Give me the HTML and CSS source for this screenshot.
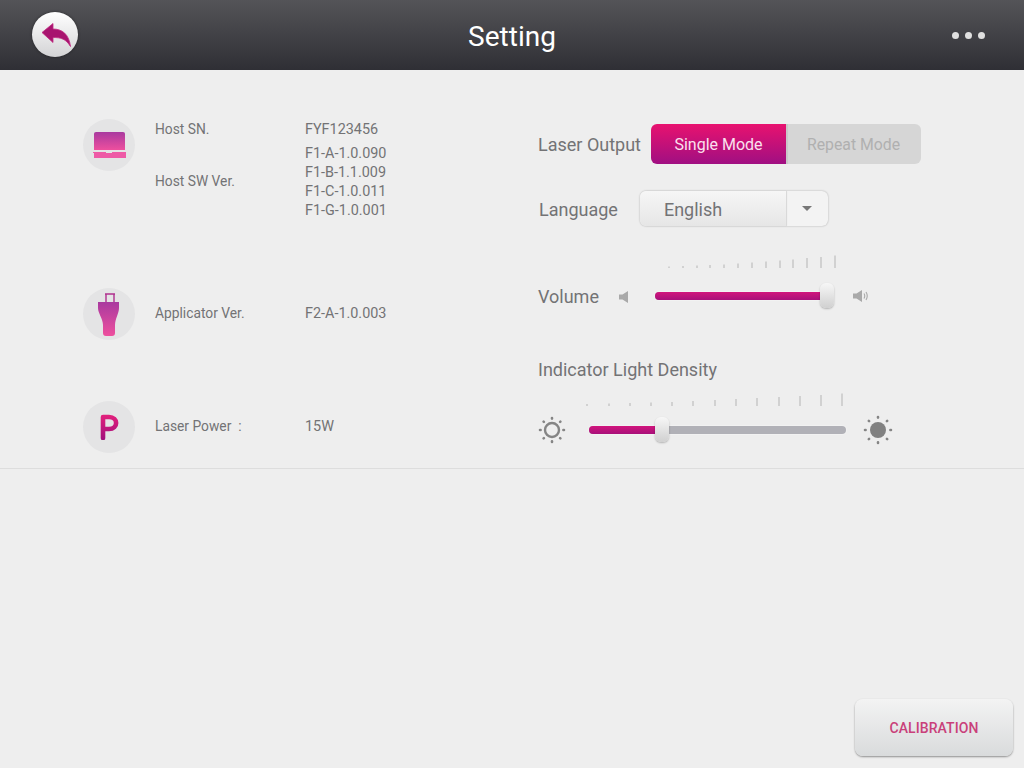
FILE: index.html
```html
<!DOCTYPE html>
<html lang="en">
<head>
<meta charset="utf-8">
<title>Setting</title>
<link rel="stylesheet" href="styles.css">
</head>
<body>
<svg class="defs" width="0" height="0" aria-hidden="true">
  <defs>
    <linearGradient id="pinkV" x1="0" y1="0" x2="0" y2="1"><stop offset="0" stop-color="#a93a9f"/><stop offset="1" stop-color="#ee4f9e"/></linearGradient>
    <linearGradient id="pinkP" gradientUnits="userSpaceOnUse" x1="0" y1="2" x2="0" y2="26"><stop offset="0" stop-color="#e0207c"/><stop offset="1" stop-color="#a00f7c"/></linearGradient>
  </defs>
</svg>
<div class="app">
  <header class="topbar">
    <button class="back">
      <svg width="30" height="24" viewBox="0 0 30 24"><path d="M1 9.5 L12 0.5 L12 6 C21 6 28 11 29.5 23.5 C25 16 20 14.5 12 14.5 L12 19.5 Z" fill="#a8146f" stroke="#c02a80" stroke-width="0.8" stroke-linejoin="round"/></svg>
    </button>
    <h1 class="title">Setting</h1>
    <div class="more"><i></i><i></i><i></i></div>
  </header>

  <main class="panel">
    <section class="info">
      <div class="info-row row-host">
        <div class="badge">
          <svg width="34" height="30" viewBox="0 0 34 30"><path d="M2 3.5 Q2 2 4 2 H31 Q33 2 33 3.5 V20 H2 Z" fill="url(#pinkV)"/><path d="M1 22 H14 V23 H20 V22 H34 V28 H2 V23 H1 Z" fill="#ee5aa6"/></svg>
        </div>
        <div class="pairs">
          <div class="pair pair-sn"><span class="label">Host SN.</span><span class="value">FYF123456</span></div>
          <div class="pair pair-sw"><span class="label">Host SW Ver.</span>
            <div class="value stack"><span>F1-A-1.0.090</span><span>F1-B-1.1.009</span><span>F1-C-1.0.011</span><span>F1-G-1.0.001</span></div>
          </div>
        </div>
      </div>
      <div class="info-row row-app">
        <div class="badge">
          <svg width="22" height="44" viewBox="0 0 22 44"><path d="M7 1 H17 M8 1 V9 M16 1 V9" fill="none" stroke="#b0308f" stroke-width="1.4"/><path d="M0 9 H21 V15 C21 20 17 26 17 32 V40 Q17 43 14 43 H8 Q5 43 5 40 V32 C5 26 0 20 0 15 Z" fill="url(#pinkV)"/></svg>
        </div>
        <div class="pair"><span class="label">Applicator Ver.</span><span class="value">F2-A-1.0.003</span></div>
      </div>
      <div class="info-row row-power">
        <div class="badge">
          <svg width="20" height="26" viewBox="0 0 20 26"><path d="M4 24 V3 H10 C19.5 3 19.5 15 10 15 H4" fill="none" stroke="url(#pinkP)" stroke-width="4.6" stroke-linecap="round" stroke-linejoin="round"/></svg>
        </div>
        <div class="pair"><span class="label">Laser Power &nbsp;:</span><span class="value">15W</span></div>
      </div>
    </section>

    <section class="controls">
      <div class="ctrl-laser">
        <span class="ctrl-label">Laser Output</span>
        <div class="segmented">
          <span class="seg seg-on">Single Mode</span>
          <span class="seg seg-off">Repeat Mode</span>
        </div>
      </div>
      <div class="ctrl-lang">
        <span class="ctrl-label">Language</span>
        <div class="select">
          <span class="select-value">English</span>
          <span class="select-arrow"><b></b></span>
        </div>
      </div>
      <div class="ctrl-volume">
        <svg class="ticks ticks-vol" width="168" height="13" viewBox="0 0 168 13" stroke="#b4b4b4" stroke-width="1">
          <path d="M1 13V11.5M15 13V11M29 13V10.5M42 13V10M56 13V9.5M70 13V8.5M84 13V7.5M98 13V6.5M112 13V5.5M125 13V4.5M139 13V3M153 13V2M167 13V0.5"/>
        </svg>
        <div class="vol-row">
          <span class="ctrl-label">Volume</span>
          <svg class="spk spk-low" width="10" height="14" viewBox="0 0 10 14"><path d="M0 4.5H3.5L9 1V13L3.5 9.5H0Z" fill="#a9a9a9"/></svg>
          <div class="slider slider-vol"><div class="fill fill-vol"></div><div class="thumb"></div></div>
          <svg class="spk spk-high" width="16" height="14" viewBox="0 0 16 14"><path d="M0 4.5H3.5L9 1V13L3.5 9.5H0Z" fill="#a9a9a9"/><path d="M11 4.5Q12.5 7 11 9.5M13 3Q15.5 7 13 11" fill="none" stroke="#a9a9a9" stroke-width="1.1"/></svg>
        </div>
      </div>
      <div class="ctrl-density">
        <span class="ctrl-label">Indicator Light Density</span>
        <svg class="ticks ticks-den" width="258" height="13" viewBox="0 0 258 13" stroke="#b4b4b4" stroke-width="1">
          <path d="M1 13V11M23 13V10.5M44 13V10M65 13V9.5M86 13V9M107 13V8M129 13V7M150 13V6M171 13V5M193 13V4M214 13V3M235 13V2M256 13V0.5"/>
        </svg>
        <div class="den-row">
          <svg width="28" height="28" viewBox="0 0 28 28"><circle cx="14" cy="14" r="7" fill="none" stroke="#858585" stroke-width="2.4"/><g stroke="#858585" stroke-width="2.6" stroke-linecap="round"><path d="M14 2V2.6M14 25.4V26M2 14H2.6M25.4 14H26M5.6 5.6L5.9 5.9M22.1 22.1L22.4 22.4M22.4 5.6L22.1 5.9M5.9 22.1L5.6 22.4"/></g></svg>
          <div class="slider slider-den"><div class="fill fill-den"></div><div class="thumb"></div></div>
          <svg width="30" height="30" viewBox="0 0 30 30"><circle cx="15" cy="15" r="8" fill="#818181"/><g stroke="#858585" stroke-width="2.6" stroke-linecap="round"><path d="M15 2V2.6M15 27.4V28M2 15H2.6M27.4 15H28M5.8 5.8L6.1 6.1M23.9 23.9L24.2 24.2M24.2 5.8L23.9 6.1M6.1 23.9L5.8 24.2"/></g></svg>
        </div>
      </div>
    </section>
  </main>

  <footer class="bottom">
    <button class="calib">CALIBRATION</button>
  </footer>
</div>
</body>
</html>
```
FILE: styles.css
```css
* { box-sizing: border-box; }
html, body { margin: 0; height: 100%; }
body { background: #eeeeee; font-family: Roboto, "Liberation Sans", sans-serif; overflow: hidden; }
.defs { position: absolute; }
.app { width: 1024px; height: 768px; display: flex; flex-direction: column; }

.topbar { height: 70px; flex: none; display: flex; align-items: center; justify-content: space-between; position: relative;
  background: linear-gradient(#545458, #2f2f35); padding: 0 39px 0 32px; }
.back { width: 46px; height: 45px; margin-top: -1px; padding: 0; border: 0; border-radius: 50%; display: flex; align-items: center; justify-content: center;
  background: linear-gradient(#ffffff, #d3d3d5); box-shadow: 0 0 3px rgba(0,0,0,.45); }
.back svg { width: 30px; height: 24px; margin-top: 1px; margin-left: 1px; flex: none; }
.title { margin: 0; position: absolute; left: 0; right: 0; top: 19px; text-align: center; color: #fff; font-size: 28px; line-height: 36px; font-weight: 400; }
.more { display: flex; gap: 6px; }
.more i { width: 7px; height: 7px; border-radius: 50%; background: #e0e0e0; }

.panel { height: 399px; flex: none; border-bottom: 1px solid #dddddd; display: flex; padding-left: 83px; }
.info { width: 455px; flex: none; display: flex; flex-direction: column; }
.info-row { display: flex; gap: 20px; }
.row-host { margin-top: 49px; height: 169px; }
.row-app { align-items: center; height: 52px; }
.row-power { align-items: center; height: 52px; margin-top: 61px; }
.badge { width: 52px; height: 52px; flex: none; border-radius: 50%; background: #e4e4e5; display: flex; align-items: center; justify-content: center; }
.row-app .badge svg { margin-top: 2px; margin-left: -1px; }
.pairs { display: flex; flex-direction: column; }
.pair { display: flex; font-size: 13.8px; color: #737375; line-height: 19px; }
.row-app .pair, .row-power .pair { margin-top: -2px; }
.pair-sn { margin-top: 1px; }
.pair-sw { margin-top: 5px; align-items: center; }
.pair-sw .label { margin-top: -2px; }
.label { width: 150px; flex: none; }
.value { font-size: 14.4px; }
.stack { display: flex; flex-direction: column; }

.controls { flex: 1; display: flex; flex-direction: column; padding-top: 54px; }
.ctrl-label { font-size: 18px; line-height: 24px; color: #737375; white-space: nowrap; }
.ctrl-laser { display: flex; align-items: center; gap: 10px; }
.ctrl-laser .ctrl-label { margin-top: 2px; }
.segmented { display: flex; height: 40px; width: 270px; border-radius: 6px; overflow: hidden; }
.seg { display: flex; align-items: center; justify-content: center; font-size: 16px; flex: 1; }
.seg-on { background: linear-gradient(#e8126f, #a00f82); color: #fbe0ee; flex: 0 0 135px; }
.seg-off { background: #d6d6d6; color: #b0b0b0; border-left: 2px solid #c9c9c9; font-size: 15.8px; padding-right: 2px; }
.ctrl-lang { display: flex; align-items: center; gap: 22px; margin-top: 27px; padding-left: 1px; height: 35px; }
.ctrl-lang .ctrl-label { margin-top: 2px; }
.select { display: flex; width: 188px; height: 35px; border-radius: 6px; background: #f3f3f3; box-shadow: 0 0 2px rgba(0,0,0,.3); }
.select-value { width: 146px; padding-left: 24px; line-height: 37px; font-size: 18px; color: #737375; border-radius: 6px 0 0 6px;
  background: linear-gradient(#f6f6f6, #e6e6e6); box-shadow: 1px 0 1px rgba(0,0,0,.12); }
.select-arrow { flex: 1; display: flex; align-items: center; justify-content: center; }
.select-arrow b { width: 0; height: 0; border: 5px solid transparent; border-top: 5px solid #777; border-bottom: 0; }

.ticks { display: block; }
.ctrl-volume { margin-top: 29px; }
.ticks-vol { margin-left: 130px; }
.vol-row { display: flex; align-items: center; margin-top: 17px; height: 24px; }
.vol-row .ctrl-label { width: 81px; }
.spk-low { margin-right: 26px; }
.spk-high { margin-left: 25px; margin-top: -2px; }
.vol-row .slider { margin-top: -2px; }
.slider { position: relative; height: 8px; border-radius: 4px; background: #b1b1b7; box-shadow: 0 0 2px rgba(255,255,255,.9); }
.slider-vol { width: 173px; }
.slider-den { width: 257px; margin: 0 17px 0 23px; }
.fill { height: 100%; border-radius: 4px 0 0 4px; background: linear-gradient(#d1157c, #a8107a); }
.fill-vol { width: 166px; }
.fill-den { width: 67px; }
.thumb { position: absolute; top: -9px; width: 14px; height: 25px; border-radius: 6px; background: linear-gradient(#f7f7f7, #d0d0d0); box-shadow: 0 1px 2px rgba(0,0,0,.25); }
.slider-vol .thumb { left: 165px; }
.slider-den .thumb { left: 66px; }

.ctrl-density { margin-top: 49px; }
.ticks-den { margin-left: 48px; margin-top: 11px; }
.den-row { display: flex; align-items: center; margin-top: 9px; height: 30px; }

.bottom { flex: 1; display: flex; justify-content: flex-end; align-items: flex-end; padding: 0 11px 12px 0; }
.calib { width: 158px; height: 57px; border: 0; border-radius: 8px; background: linear-gradient(#f3f3f3, #d9dbdc); box-shadow: 0 1px 2px rgba(0,0,0,.4); color: #c9407a; font: 500 14px Roboto, "Liberation Sans", sans-serif; letter-spacing: .1px; }
```
